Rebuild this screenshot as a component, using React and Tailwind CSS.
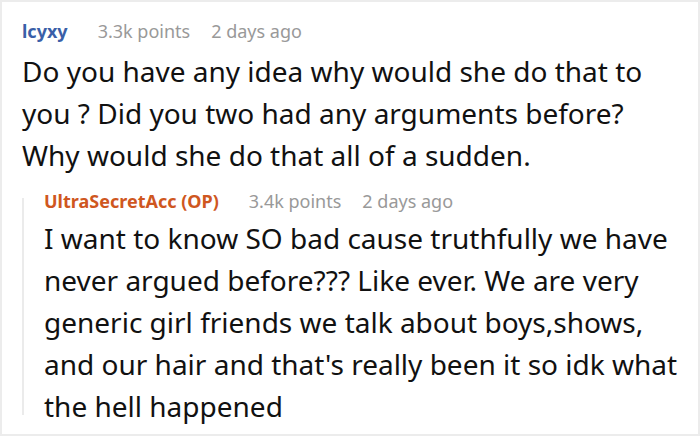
import React from 'react';

const font = { fontFamily: '"Noto Sans", "Open Sans", sans-serif' };

const Meta = ({ name, nameClass, points }) => (
    <div className="flex items-baseline text-[18px] leading-[24px]">
        <span className={`font-bold mr-[30px] ${nameClass}`}>{name}</span>
        <span className="text-[#999999] mr-[21px]">{points} points</span>
        <span className="text-[#999999]">2 days ago</span>
    </div>
);

const App = () => {
    return (
        <div className="w-[700px] h-[436px] bg-white border-2 border-[#ececec] overflow-hidden" style={font}>
            <div className="pl-[20px] pt-[17px] pr-[14px]">
                <Meta name="lcyxy" nameClass="text-[#3a5fa8]" points="3.3k" />
                <p className="mt-[7px] text-[28px] leading-[42px] text-[#111111]">
                    Do you have any idea why would she do that to you ? Did you two had any arguments before? Why would she do that all of a sudden.
                </p>

                <div className="mt-[13px] flex">
                    <div className="w-[2px] shrink-0 bg-[#ebebeb] mt-[9px] mb-[12px]" />
                    <div className="pl-[20px]">
                        <Meta name="UltraSecretAcc (OP)" nameClass="text-[#cf571f]" points="3.4k" />
                        <p className="mt-[4px] text-[28px] leading-[42px] text-[#111111]">
                            I want to know SO bad cause truthfully we have never argued before??? Like ever. We are very generic girl friends we talk about boys,shows, and our hair and that's really been it so idk what the hell happened
                        </p>
                    </div>
                </div>
            </div>
        </div>
    );
};

export default App;
